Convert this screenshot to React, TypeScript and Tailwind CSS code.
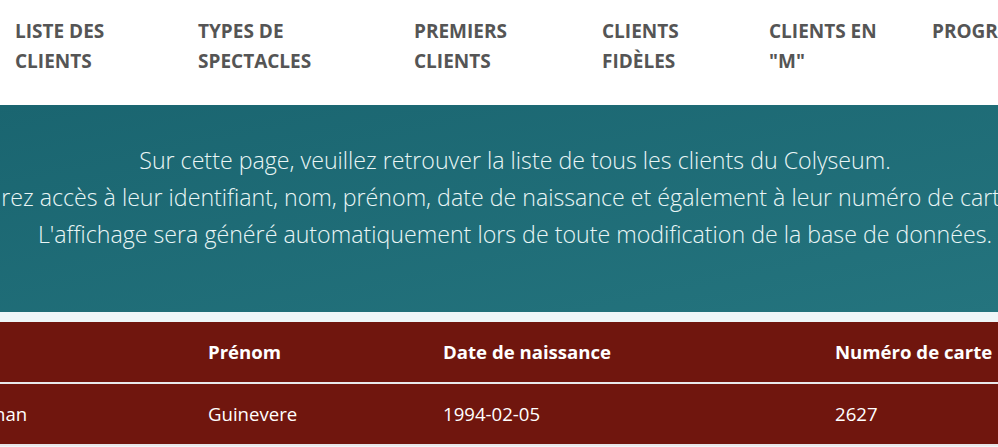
import React from "react";

const navItems = [
  { label: ["LISTE DES", "CLIENTS"], width: "w-[183px]" },
  { label: ["TYPES DE", "SPECTACLES"], width: "w-[216px]" },
  { label: ["PREMIERS", "CLIENTS"], width: "w-[188px]" },
  { label: ["CLIENTS", "FIDÈLES"], width: "w-[167px]" },
  { label: ["CLIENTS EN", "\"M\""], width: "w-[163px]" },
  { label: ["PROGRAMMATION"], width: "w-[220px]" },
];

const clients = [
  { id: 1, nom: "Buchanan", prenom: "Guinevere", naissance: "1994-02-05", carte: "2627" },
];

const App: React.FC = () => {
  return (
    <div
      className="w-[998px] h-[447px] overflow-hidden bg-[#eef6f8]"
      style={{ fontFamily: '"Open Sans", "Noto Sans", sans-serif' }}
    >
      {/* Navigation */}
      <nav className="h-[105px] bg-white pt-[16px] pl-[15px]">
        <ul className="flex whitespace-nowrap">
          {navItems.map((item) => (
            <li
              key={item.label.join(" ")}
              className={`${item.width} shrink-0 text-[19px] leading-[30px] font-bold text-[#555555]`}
            >
              {item.label.map((line) => (
                <div key={line}>{line}</div>
              ))}
            </li>
          ))}
        </ul>
      </nav>

      {/* Banner */}
      <section className="h-[207px] bg-gradient-to-br from-[#1a6570] to-[#24747e] pt-[37px] flex flex-col items-center text-[#eaf6f6] text-[23.2px] leading-[37px] font-light">
        <p className="whitespace-nowrap ml-[32px]">
          Sur cette page, veuillez retrouver la liste de tous les clients du Colyseum.
        </p>
        <p className="whitespace-nowrap -ml-[62px]">
          Vous aurez accès à leur identifiant, nom, prénom, date de naissance et également à leur numéro de carte.
        </p>
        <p className="whitespace-nowrap ml-[32px]">
          L'affichage sera généré automatiquement lors de toute modification de la base de données.
        </p>
      </section>

      {/* Table */}
      <div className="mt-[10px] bg-[#70160e] text-white">
        <table className="table-fixed w-[1145px] border-collapse -ml-[90px] text-[18.6px]">
          <colgroup>
            <col className="w-[298px]" />
            <col className="w-[235px]" />
            <col className="w-[392px]" />
            <col className="w-[220px]" />
          </colgroup>
          <thead>
            <tr className="h-[61px] border-b-2 border-[#e8e8ea]">
              <th className="text-left font-bold pl-[16px]">Nom</th>
              <th className="text-left font-bold">Prénom</th>
              <th className="text-left font-bold">Date de naissance</th>
              <th className="text-left font-bold">Numéro de carte</th>
            </tr>
          </thead>
          <tbody>
            {clients.map((c) => (
              <tr key={c.id} className="h-[62px] border-b-2 border-[#e8e8ea]">
                <td className="pl-[30px]">{c.nom}</td>
                <td>{c.prenom}</td>
                <td>{c.naissance}</td>
                <td>{c.carte}</td>
              </tr>
            ))}
          </tbody>
        </table>
      </div>
    </div>
  );
};

export default App;
